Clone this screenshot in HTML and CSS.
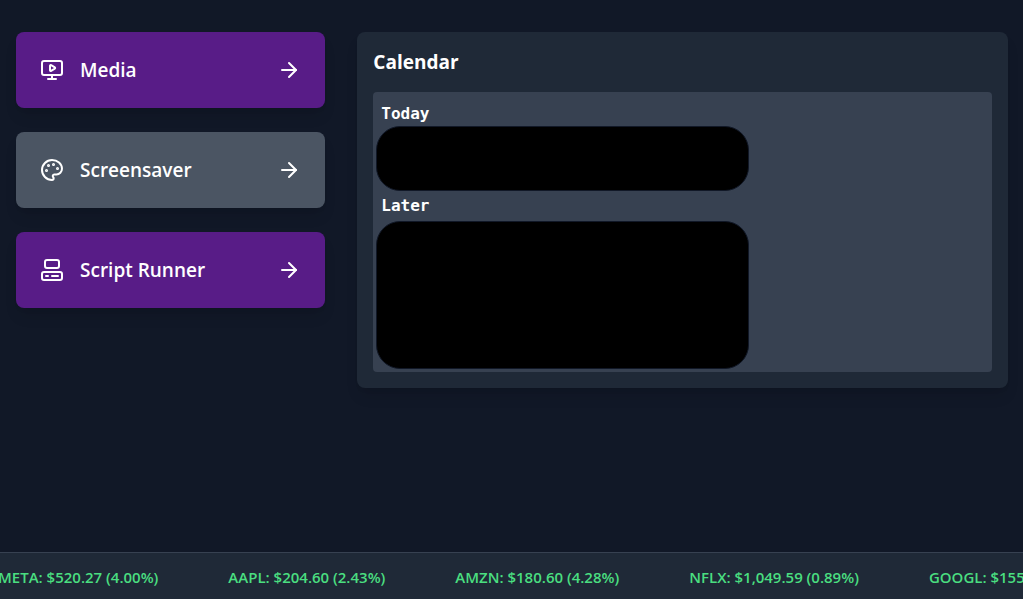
FILE: index.html
```html
<!DOCTYPE html>
<html lang="en">
<head>
<meta charset="utf-8">
<meta name="viewport" content="width=device-width, initial-scale=1">
<title>Dashboard</title>
<link rel="stylesheet" href="styles.css">
</head>
<body>
<main class="dashboard">
  <nav class="actions" aria-label="Tools">
    <button type="button" class="action">
      <svg class="icon" viewBox="0 0 24 24" aria-hidden="true"><path d="M10 7.75a.75.75 0 0 1 1.142-.638l3.664 2.249a.75.75 0 0 1 0 1.278l-3.664 2.25a.75.75 0 0 1-1.142-.64z"/><path d="M12 17v4"/><path d="M8 21h8"/><rect x="2" y="3" width="20" height="14" rx="2"/></svg>
      <span class="action-label">Media</span>
      <svg class="icon" viewBox="0 0 24 24" aria-hidden="true"><path d="M5 12h14"/><path d="m12 5 7 7-7 7"/></svg>
    </button>
    <button type="button" class="action action-muted">
      <svg class="icon" viewBox="0 0 24 24" aria-hidden="true"><circle class="dot" cx="13.5" cy="6.5" r=".5"/><circle class="dot" cx="17.5" cy="10.5" r=".5"/><circle class="dot" cx="8.5" cy="7.5" r=".5"/><circle class="dot" cx="6.5" cy="12.5" r=".5"/><path d="M12 2C6.5 2 2 6.5 2 12s4.5 10 10 10c.926 0 1.648-.746 1.648-1.688 0-.437-.18-.835-.437-1.125-.29-.289-.438-.652-.438-1.125a1.64 1.64 0 0 1 1.668-1.668h1.996c3.051 0 5.555-2.503 5.555-5.554C21.965 6.012 17.461 2 12 2z"/></svg>
      <span class="action-label">Screensaver</span>
      <svg class="icon" viewBox="0 0 24 24" aria-hidden="true"><path d="M5 12h14"/><path d="m12 5 7 7-7 7"/></svg>
    </button>
    <button type="button" class="action">
      <svg class="icon" viewBox="0 0 24 24" aria-hidden="true"><rect x="5" y="2" width="14" height="8" rx="2"/><rect x="2" y="14" width="20" height="8" rx="2"/><path d="M6 18h2"/><path d="M12 18h6"/></svg>
      <span class="action-label">Script Runner</span>
      <svg class="icon" viewBox="0 0 24 24" aria-hidden="true"><path d="M5 12h14"/><path d="m12 5 7 7-7 7"/></svg>
    </button>
  </nav>
  <section class="panel">
    <h2 class="panel-title">Calendar</h2>
    <div class="agenda">
      <h3 class="agenda-heading">Today</h3>
      <div class="events events-today"></div>
      <h3 class="agenda-heading agenda-heading-later">Later</h3>
      <div class="events events-later"></div>
    </div>
  </section>
</main>
<footer class="ticker">
  <ul class="ticker-track">
    <li>META: $520.27 (4.00%)</li>
    <li>AAPL: $204.60 (2.43%)</li>
    <li>AMZN: $180.60 (4.28%)</li>
    <li>NFLX: $1,049.59 (0.89%)</li>
    <li>GOOGL: $155</li>
  </ul>
</footer>
</body>
</html>
```

FILE: styles.css
```css
*, *::before, *::after {
  box-sizing: border-box;
}

body {
  margin: 0;
  min-height: 100vh;
  display: flex;
  flex-direction: column;
  background: #111827;
  color: #fff;
  font-family: "Open Sans", "Noto Sans", sans-serif;
}

.dashboard {
  flex: 1;
  display: grid;
  grid-template-columns: repeat(3, minmax(0, 1fr));
  gap: 32px;
  align-items: start;
  padding: 32px 15px 32px 16px;
}

.actions {
  display: grid;
  gap: 24px;
}

.action {
  display: flex;
  align-items: center;
  gap: 16px;
  width: 100%;
  padding: 24px;
  border: 0;
  border-radius: 8px;
  background: #581c87;
  color: inherit;
  font: 600 19px/28px "Open Sans", "Noto Sans", sans-serif;
  text-align: left;
  cursor: pointer;
  box-shadow: 0 10px 15px -3px rgb(0 0 0 / 0.1), 0 4px 6px -4px rgb(0 0 0 / 0.1);
}

.action-muted {
  background: #4b5563;
}

.action-label {
  flex: 1;
}

.icon {
  flex: none;
  width: 24px;
  height: 24px;
  fill: none;
  stroke: currentColor;
  stroke-width: 2;
  stroke-linecap: round;
  stroke-linejoin: round;
}

.dot {
  fill: currentColor;
}

.panel {
  grid-column: span 2;
  padding: 16px;
  border-radius: 8px;
  background: #1f2937;
  box-shadow: 0 10px 15px -3px rgb(0 0 0 / 0.1), 0 4px 6px -4px rgb(0 0 0 / 0.1);
}

.panel-title {
  margin: 0 0 16px;
  font-size: 19px;
  font-weight: 700;
  line-height: 28px;
}

.agenda {
  padding: 10px 3px 3px;
  border-radius: 4px;
  background: #374151;
}

.agenda-heading {
  margin: 0;
  padding-left: 5px;
  font: 700 16px/24px "DejaVu Sans Mono", "Liberation Mono", monospace;
}

.agenda-heading-later {
  line-height: 30px;
}

.events {
  max-width: 373px;
  border: 1px solid #111827;
  border-radius: 24px;
  background: #000;
}

.events-today {
  height: 65px;
}

.events-later {
  height: 148px;
}

.ticker {
  overflow: hidden;
  padding: 12px 0 10px;
  border-top: 1px solid #374151;
  background: #1f2937;
  color: #4ade80;
}

.ticker-track {
  display: flex;
  gap: 70px;
  margin: 0 0 0 -2px;
  padding: 0;
  list-style: none;
  font-size: 15px;
  font-weight: 600;
  line-height: 24px;
  white-space: nowrap;
}
```
